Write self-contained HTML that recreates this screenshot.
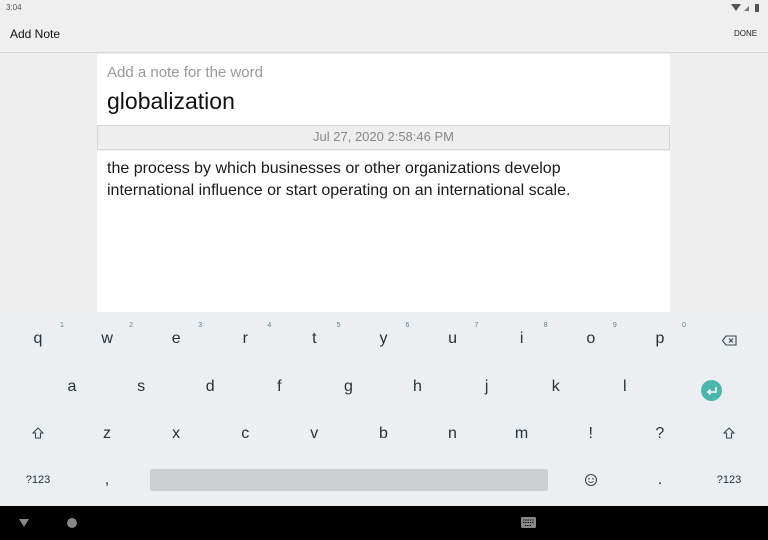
<!DOCTYPE html>
<html><head><meta charset="utf-8"><style>
*{margin:0;padding:0;box-sizing:border-box}
body{width:768px;height:540px;position:relative;overflow:hidden;background:#eeeeee;font-family:"Liberation Sans",sans-serif;color:#212121}
.a{position:absolute}
.k{position:absolute;font-size:16px;color:#263238;transform:translateX(-50%);text-align:center}
.n{position:absolute;font-size:7px;color:#607d8b;transform:translateX(-50%)}
</style></head><body>
<div class="a" style="left:0;top:0;width:768px;height:53px;background:#efefef;border-bottom:1px solid #d8d8d8"></div>
<div class="a" style="left:6px;top:3px;font-size:8px;color:#555">3:04</div>
<svg class="a" style="left:731px;top:3px" width="30" height="9"><path d="M0 1 L10 1 L5 8Z" fill="#555"/><path d="M13 8 L18 3 L18 8Z" fill="#777"/><rect x="24" y="1" width="4" height="8" fill="#555"/></svg>
<div class="a" style="left:10px;top:27px;font-size:12px;color:#111">Add Note</div>
<div class="a" style="left:734px;top:29px;font-size:8px;color:#222">DONE</div>
<div class="a" style="left:97px;top:54px;width:573px;height:71px;background:#fff"></div>
<div class="a" style="left:107px;top:64px;font-size:15px;color:#999">Add a note for the word</div>
<div class="a" style="left:107px;top:88px;font-size:23px;color:#111">globalization</div>
<div class="a" style="left:97px;top:125px;width:573px;height:25px;background:#eeeeee;border:1px solid #d6d6d6"></div>
<div class="a" style="left:97px;top:129px;width:573px;text-align:center;font-size:13px;color:#888">Jul 27, 2020 2:58:46 PM</div>
<div class="a" style="left:97px;top:151px;width:573px;height:161px;background:#fff"></div>
<div class="a" style="left:107px;top:158px;font-size:16px;line-height:22px;color:#1a1a1a;width:560px;white-space:nowrap">the process by which businesses or other organizations develop<br>international influence or start operating on an international scale.</div>
<div class="a" style="left:0;top:312px;width:768px;height:194px;background:#eceff1"></div>
<div id="kb"></div>
<div class="a" style="left:150px;top:469px;width:398px;height:22px;background:#cbcfd1;border-radius:2px"></div>
<div class="a" style="left:701px;top:380px;width:21px;height:21px;border-radius:50%;background:#4db6ac"></div>
<svg class="a" style="left:701px;top:380px" width="21" height="21"><path d="M15 7 V12 H7 M9.5 9.5 L7 12 L9.5 14.5" stroke="#fff" stroke-width="1.6" fill="none"/></svg>
<svg class="a" style="left:722px;top:335px" width="15" height="11"><path d="M4 1 H14 V10 H4 L0.5 5.5Z M7 3.5 L11 7.5 M11 3.5 L7 7.5" stroke="#37474f" stroke-width="1.1" fill="none"/></svg>
<svg class="a" style="left:32px;top:427px" width="12" height="12"><path d="M6 1 L11 6 H8.5 V11 H3.5 V6 H1Z" stroke="#37474f" stroke-width="1.1" fill="none"/></svg>
<svg class="a" style="left:723px;top:427px" width="12" height="12"><path d="M6 1 L11 6 H8.5 V11 H3.5 V6 H1Z" stroke="#37474f" stroke-width="1.1" fill="none"/></svg>
<svg class="a" style="left:584px;top:473px" width="14" height="14"><circle cx="7" cy="7" r="5.5" stroke="#37474f" stroke-width="1.1" fill="none"/><circle cx="5" cy="5.8" r=".8" fill="#37474f"/><circle cx="9" cy="5.8" r=".8" fill="#37474f"/><path d="M4.5 8.3 Q7 10.8 9.5 8.3" stroke="#37474f" fill="none"/></svg>
<div class="a" style="left:0;top:506px;width:768px;height:34px;background:#000"></div>
<svg class="a" style="left:18px;top:518px" width="12" height="10"><path d="M1 1 H11 L6 9Z" fill="#888"/></svg>
<div class="a" style="left:67px;top:518px;width:10px;height:10px;border-radius:50%;background:#888"></div>
<svg class="a" style="left:521px;top:517px" width="15" height="12"><rect x="0" y="0" width="15" height="11" rx="1.5" fill="#888"/><path d="M2 3H13M2 5.5H13M4 8.5H11" stroke="#000" stroke-width="1" stroke-dasharray="1.3 1"/></svg>
<script>
var kb=document.getElementById('kb'),h='';
var r1='qwertyuiop',r2='asdfghjkl',r3=['z','x','c','v','b','n','m','!','?'];
for(var i=0;i<10;i++){var x=38+i*69.1;h+='<div class="k" style="left:'+x+'px;top:330px">'+r1[i]+'</div><div class="n" style="left:'+(x+24)+'px;top:322px">'+((i+1)%10)+'</div>';}
for(i=0;i<9;i++){h+='<div class="k" style="left:'+(72+i*69.1)+'px;top:378px">'+r2[i]+'</div>';}
for(i=0;i<9;i++){h+='<div class="k" style="left:'+(107+i*69.1)+'px;top:425px">'+r3[i]+'</div>';}
h+='<div class="k" style="left:38px;top:474px;font-size:11px">?123</div><div class="k" style="left:729px;top:474px;font-size:11px">?123</div><div class="k" style="left:107px;top:471px">,</div><div class="k" style="left:660px;top:471px">.</div>';
kb.innerHTML=h;
</script>
</body></html>
